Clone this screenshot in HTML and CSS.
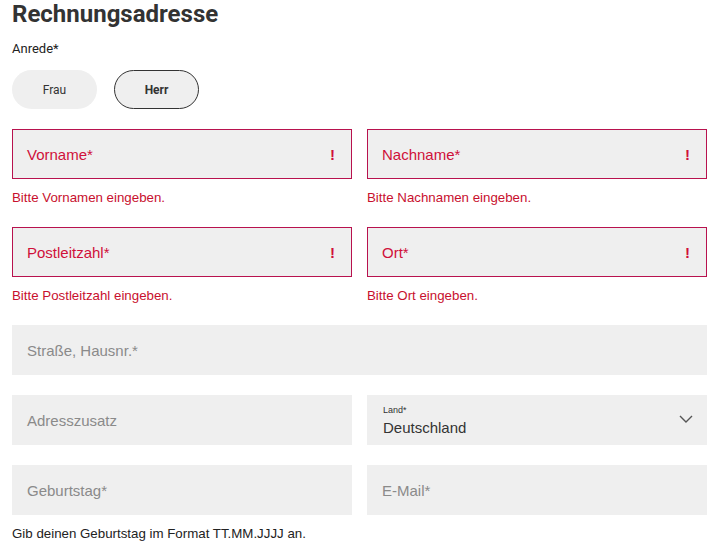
FILE: index.html
```html
<!DOCTYPE html>
<html lang="de">
<head>
<meta charset="utf-8">
<link rel="stylesheet" href="styles.css">
</head>
<body>
<main class="form">
  <h1 class="title">Rechnungsadresse</h1>
  <div class="salutation-label">Anrede*</div>
  <div class="salutation">
    <button class="pill">Frau</button>
    <button class="pill pill-active">Herr</button>
  </div>
  <div class="grid">
    <div class="group">
      <div class="field field-error"><span class="ph">Vorname*</span><span class="bang">!</span></div>
      <div class="err">Bitte Vornamen eingeben.</div>
    </div>
    <div class="group">
      <div class="field field-error"><span class="ph">Nachname*</span><span class="bang">!</span></div>
      <div class="err">Bitte Nachnamen eingeben.</div>
    </div>
    <div class="group">
      <div class="field field-error"><span class="ph">Postleitzahl*</span><span class="bang">!</span></div>
      <div class="err">Bitte Postleitzahl eingeben.</div>
    </div>
    <div class="group">
      <div class="field field-error"><span class="ph">Ort*</span><span class="bang">!</span></div>
      <div class="err">Bitte Ort eingeben.</div>
    </div>
    <div class="group span2">
      <div class="field"><span class="ph">Straße, Hausnr.*</span></div>
    </div>
    <div class="group">
      <div class="field"><span class="ph">Adresszusatz</span></div>
    </div>
    <div class="group">
      <div class="field field-select">
        <div class="sel">
          <span class="sel-label">Land*</span>
          <span class="sel-value">Deutschland</span>
        </div>
        <svg class="chev" width="14" height="8" viewBox="0 0 14 8"><path d="M1 1 L7 7 L13 1" fill="none" stroke="#555" stroke-width="1.4"/></svg>
      </div>
    </div>
    <div class="group">
      <div class="field"><span class="ph">Geburtstag*</span></div>
      <div class="hint">Gib deinen Geburtstag im Format TT.MM.JJJJ an.</div>
    </div>
    <div class="group">
      <div class="field"><span class="ph">E-Mail*</span></div>
    </div>
  </div>
</main>
</body>
</html>
```

FILE: styles.css
```css
* { box-sizing: border-box; }
html, body { margin: 0; padding: 0; background: #fff; }
body { font-family: "Liberation Sans", Arial, sans-serif; color: #333; }
.form { padding: 0 17px 0 12px; }
.title {
  font-family: Roboto, "Liberation Sans", sans-serif;
  font-weight: 700;
  font-size: 24px;
  line-height: 28px;
  margin: 0;
  color: #333;
}
.salutation-label {
  font-family: Roboto, "Liberation Sans", sans-serif;
  font-size: 13px;
  line-height: 16px;
  margin-top: 13px;
  color: #222;
}
.salutation { display: flex; gap: 17px; margin-top: 13px; }
.pill {
  width: 85px;
  height: 39px;
  border-radius: 20px;
  border: 1px solid transparent;
  background: #efefef;
  font-family: Roboto, "Liberation Sans", sans-serif;
  font-size: 12px;
  color: #333;
  padding: 0;
}
.pill-active { border-color: #333; font-weight: 700; }
.grid {
  display: grid;
  grid-template-columns: 1fr 1fr;
  column-gap: 15px;
  row-gap: 20px;
  margin-top: 20px;
}
.span2 { grid-column: span 2; }
.field {
  height: 50px;
  background: #efefef;
  display: flex;
  align-items: center;
  justify-content: space-between;
  padding: 0 15px 0 14px;
  font-size: 15px;
  border: 1px solid transparent;
}
.ph { color: #8a8a8a; }
.field-error { border-color: #b8124e; }
.field-error .ph { color: #d0103a; }
.bang { color: #d0103a; font-weight: 700; font-size: 15px; margin-right: 1px; }
.err {
  color: #c8102e;
  font-size: 13.3px;
  line-height: 18px;
  margin-top: 10px;
}
.hint {
  color: #222;
  font-size: 13.3px;
  line-height: 18px;
  margin-top: 10px;
}
.field-select { padding-right: 13px; padding-left: 15px; }
.sel { display: flex; flex-direction: column; padding-top: 2px; }
.sel-label { font-size: 9px; line-height: 11px; color: #333; }
.sel-value { font-size: 15px; line-height: 18px; color: #333; margin-top: 3px; }
.chev { margin-bottom: 2px; }
```
